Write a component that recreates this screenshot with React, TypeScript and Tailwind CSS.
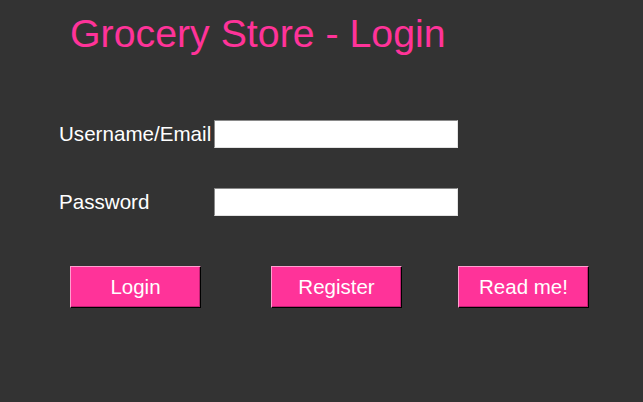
export default function App() {
  return (
    <div className="h-[402px] w-[643px] bg-[#333333] font-['Liberation_Sans',Arial,sans-serif]">
      <h1 className="pl-[70px] pt-[14px] text-[39.3px] leading-[39px] text-[#ff3399]">
        Grocery Store - Login
      </h1>

      <div className="mt-[67px] flex flex-col gap-[40px] pl-[59px]">
        <div className="flex items-center">
          <label className="w-[155px] text-[20.6px] leading-[28px] text-white">Username/Email</label>
          <input
            type="text"
            className="h-[28px] w-[244px] border border-t-[#8a8a8a] border-l-[#8a8a8a] border-b-[#e3e3e3] border-r-[#e3e3e3] bg-white px-1 text-[16px] outline-none"
          />
        </div>
        <div className="flex items-center">
          <label className="w-[155px] text-[20.6px] leading-[28px] text-white">Password</label>
          <input
            type="password"
            className="h-[28px] w-[244px] border border-t-[#8a8a8a] border-l-[#8a8a8a] border-b-[#e3e3e3] border-r-[#e3e3e3] bg-white px-1 text-[16px] outline-none"
          />
        </div>
      </div>

      <div className="mt-[50px] flex pl-[70px]">
        <button className="h-[42px] w-[131px] border border-t-[#ff9fcf] border-l-[#ff9fcf] border-b-black border-r-black bg-[#ff3399] text-[20.5px] text-white shadow-[inset_-1px_-1px_0_#c41f73]">
          Login
        </button>
        <button className="ml-[70px] h-[42px] w-[131px] border border-t-[#ff9fcf] border-l-[#ff9fcf] border-b-black border-r-black bg-[#ff3399] text-[20.5px] text-white shadow-[inset_-1px_-1px_0_#c41f73]">
          Register
        </button>
        <button className="ml-[56px] h-[42px] w-[131px] border border-t-[#ff9fcf] border-l-[#ff9fcf] border-b-black border-r-black bg-[#ff3399] text-[20.5px] text-white shadow-[inset_-1px_-1px_0_#c41f73]">
          Read me!
        </button>
      </div>
    </div>
  )
}
